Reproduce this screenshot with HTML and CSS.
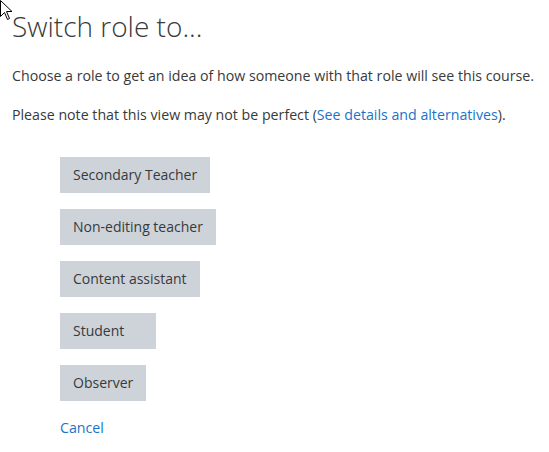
FILE: index.html
```html
<!DOCTYPE html>
<html>
<head>
<meta charset="utf-8">
<link rel="stylesheet" href="styles.css">
</head>
<body>
<svg class="cursor" width="13" height="21" viewBox="0 0 13 21"><path d="M0.5 0.5 L0.5 16.5 L4.5 12.5 L7.5 19.5 L9.5 18.5 L6.5 11.5 L12 11.5 Z" fill="#fff" stroke="#000" stroke-width="1"/></svg>
<main class="page">
  <h1 class="title">Switch role to...</h1>
  <p class="para">Choose a role to get an idea of how someone with that role will see this course.</p>
  <p class="para">Please note that this view may not be perfect (<a class="link" href="#">See details and alternatives</a>).</p>
  <div class="roles">
    <button class="btn">Secondary Teacher</button>
    <button class="btn">Non-editing teacher</button>
    <button class="btn">Content assistant</button>
    <button class="btn btn-wide">Student</button>
    <button class="btn">Observer</button>
    <a class="link cancel" href="#">Cancel</a>
  </div>
</main>
</body>
</html>
```
FILE: styles.css
```css
html, body { margin: 0; padding: 0; background: #fff; }
body { font-family: "Open Sans", "Noto Sans", sans-serif; color: #373a3c; font-size: 14.2px; line-height: 20px; }
.cursor { position: absolute; left: 0; top: 0; }
.page { padding: 0 0 0 12px; }
.title { margin: 0; padding-top: 6px; font-weight: 300; font-size: 28px; line-height: 40px; color: #3a3a3a; }
.para { margin: 0; white-space: nowrap; }
.para:first-of-type { margin-top: 20px; }
.para + .para { margin-top: 19px; }
.link { color: #1a73c9; text-decoration: none; }
.roles { display: flex; flex-direction: column; align-items: flex-start; gap: 16px; margin: 32px 0 0 48px; }
.btn { font: inherit; font-size: 14px; color: #373a3c; background: #ced3da; border: 0; border-radius: 0; height: 36px; padding: 0 13px; }
.btn-wide { padding-right: 32px; }
.cancel { margin-top: 1px; }
```
